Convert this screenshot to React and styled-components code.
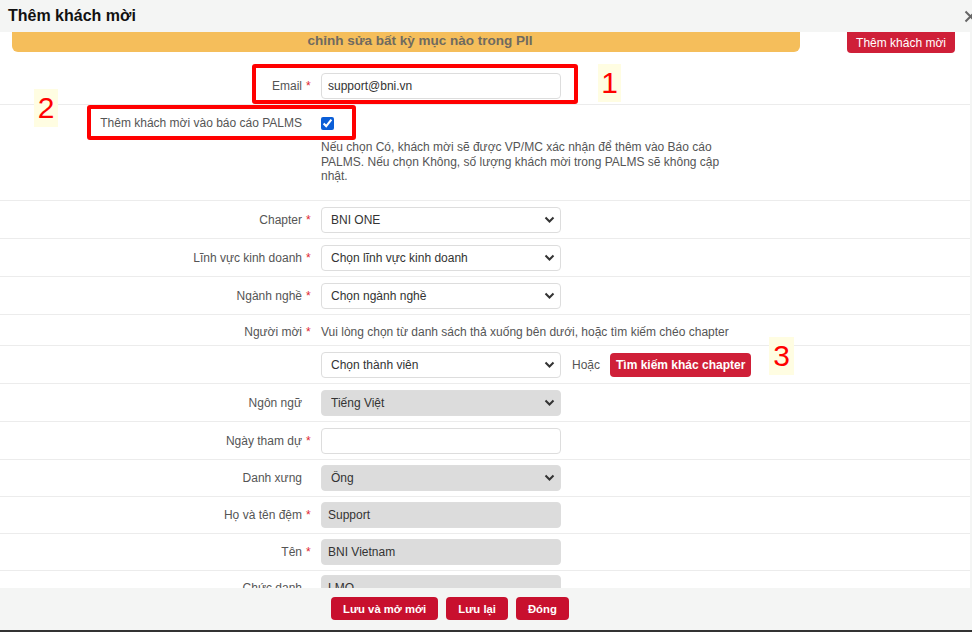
import React from "react";
import styled, { createGlobalStyle } from "styled-components";

const GlobalStyle = createGlobalStyle`
  html, body {
    margin: 0;
    padding: 0;
    background: #333;
  }
  body {
    font-family: "Liberation Sans", Arial, sans-serif;
  }
`;

const Modal = styled.div`
  position: relative;
  width: 972px;
  height: 630px;
  display: flex;
  flex-direction: column;
  background: #f4f5f4;
  overflow: hidden;
`;

const Header = styled.div`
  height: 32px;
  flex: none;
  display: flex;
  align-items: center;
  justify-content: space-between;
  padding-left: 8px;
`;

const Title = styled.h4`
  margin: 0;
  font-size: 16px;
  font-weight: 700;
  color: #111;
`;

const Close = styled.button`
  border: none;
  background: none;
  padding: 0;
  margin-right: -5px;
  display: flex;
  color: #666;
`;

const Body = styled.div`
  flex: 1;
  background: #fff;
  margin-right: 2px;
  overflow: hidden;
`;

const TopRow = styled.div`
  display: flex;
  align-items: flex-start;
  margin-bottom: 14px;
`;

const Banner = styled.div`
  width: 788px;
  height: 20px;
  margin-left: 12px;
  padding-left: 28px;
  box-sizing: border-box;
  background: #f5be5b;
  border-radius: 0 0 6px 6px;
  color: #6f6a60;
  font-size: 13.5px;
  font-weight: 700;
  line-height: 17px;
  text-align: center;
`;

const RedButton = styled.button`
  height: ${(p) => p.$h || 24}px;
  padding: 0 ${(p) => p.$px || 10}px;
  border: none;
  border-radius: ${(p) => (p.$flatTop ? "0 0 4px 4px" : "4px")};
  background: ${(p) => p.$bg || "#cf1f38"};
  color: #fff;
  font-family: inherit;
  font-size: ${(p) => p.$fs || 11.3}px;
  font-weight: 700;
  white-space: nowrap;
`;

const AddButton = styled(RedButton)`
  margin-left: auto;
  margin-right: 15px;
  font-weight: 400;
`;

const Row = styled.div`
  display: grid;
  grid-template-columns: 302px 19px 240px 1fr;
  align-items: ${(p) => (p.$top ? "start" : "center")};
  padding: ${(p) => p.$pad || "6px 0 5px"};
  border-bottom: 1px solid #ececec;
`;

const Label = styled.div`
  grid-column: 1;
  text-align: right;
  font-size: 12px;
  line-height: ${(p) => p.$lh || 16}px;
  color: #555;
  white-space: nowrap;
`;

const Star = styled.span`
  grid-column: 2;
  padding-left: 4px;
  color: #e0262f;
  font-size: 12px;
  line-height: ${(p) => p.$lh || 16}px;
`;

const Field = styled.div`
  grid-column: 3;
  position: relative;
`;

const Extra = styled.div`
  grid-column: ${(p) => p.$span || "4"};
  display: flex;
  align-items: center;
  gap: 10px;
  padding-left: ${(p) => p.$pl || 0}px;
  font-size: 12px;
  color: #555;
  line-height: 16px;
  white-space: nowrap;
`;

const Input = styled.input`
  width: 100%;
  height: 26px;
  box-sizing: border-box;
  padding: 0 6px;
  border: 1px solid #ddd;
  border-radius: 4px;
  background: ${(p) => (p.$readonly ? "#dcdcdc" : "#fff")};
  font-family: inherit;
  font-size: 12px;
  color: #333;
  outline: none;
`;

const Select = styled.select`
  appearance: none;
  width: 100%;
  height: 26px;
  box-sizing: border-box;
  padding: 0 24px 0 9px;
  border: 1px solid #ddd;
  border-radius: 4px;
  background: ${(p) => (p.$readonly ? "#dcdcdc" : "#fff")};
  font-family: inherit;
  font-size: 12px;
  color: #333;
  outline: none;
`;

const Chevron = styled.svg`
  position: absolute;
  right: 6px;
  top: 9px;
  pointer-events: none;
`;

const CheckLine = styled.div`
  height: 20px;
  display: flex;
  align-items: center;
`;

const Check = styled.input`
  margin: 0;
  width: 13px;
  height: 13px;
  accent-color: #0b5ed7;
`;

const Help = styled.p`
  width: 410px;
  margin: 7px 0 0;
  font-size: 12px;
  line-height: 14.5px;
  color: #555;
  white-space: normal;
`;

const Footer = styled.div`
  height: 42px;
  flex: none;
  box-sizing: border-box;
  display: flex;
  align-items: flex-start;
  gap: 8px;
  padding: 9px 0 0 331px;
`;

const Mark = styled.div`
  position: absolute;
  left: ${(p) => p.$x}px;
  top: ${(p) => p.$y}px;
  width: ${(p) => p.$w}px;
  height: ${(p) => p.$h}px;
  box-sizing: border-box;
  border: 4px solid #f00;
  border-radius: 3px;
  pointer-events: none;
`;

const Num = styled.div`
  position: absolute;
  left: ${(p) => p.$x}px;
  top: ${(p) => p.$y}px;
  width: ${(p) => p.$w}px;
  height: 38px;
  background: #fffde2;
  color: #f00;
  font-size: 30px;
  line-height: 38px;
  text-align: center;
`;

const ChevronIcon = () => (
  <Chevron width="11" height="8" viewBox="0 0 11 8">
    <path d="M1.5 1.5 L5.5 5.5 L9.5 1.5" fill="none" stroke="#333" strokeWidth="2" />
  </Chevron>
);

const SelectField = ({ value, readonly }) => (
  <Field>
    <Select $readonly={readonly} value={value} onChange={() => {}}>
      <option>{value}</option>
    </Select>
    <ChevronIcon />
  </Field>
);

const InputField = ({ value, readonly }) => (
  <Field>
    <Input $readonly={readonly} value={value} readOnly />
  </Field>
);

const FormRow = ({ label, required, pad, children }) => (
  <Row $pad={pad}>
    <Label>{label}</Label>
    {required && <Star>*</Star>}
    {children}
  </Row>
);

export default function App() {
  return (
    <>
      <GlobalStyle />
      <Modal>
        <Header>
          <Title>Thêm khách mời</Title>
          <Close>
            <svg width="13" height="13" viewBox="0 0 13 13">
              <path d="M1.5 1.5 L11.5 11.5 M11.5 1.5 L1.5 11.5" stroke="#666" strokeWidth="2" />
            </svg>
          </Close>
        </Header>
        <Body>
          <TopRow>
            <Banner>chỉnh sửa bất kỳ mục nào trong PII</Banner>
            <AddButton $h={21} $px={9} $fs={12} $flatTop>
              Thêm khách mời
            </AddButton>
          </TopRow>

          <FormRow label="Email" required>
            <InputField value="support@bni.vn" />
          </FormRow>

          <Row $top $pad="8px 0 16px">
            <Label $lh={20}>Thêm khách mời vào báo cáo PALMS</Label>
            <Extra $span="3 / 5">
              <div>
                <CheckLine>
                  <Check type="checkbox" checked readOnly />
                </CheckLine>
                <Help>
                  Nếu chọn Có, khách mời sẽ được VP/MC xác nhận để thêm vào Báo cáo
                  PALMS. Nếu chọn Không, số lượng khách mời trong PALMS sẽ không cập
                  nhật.
                </Help>
              </div>
            </Extra>
          </Row>

          <FormRow label="Chapter" required>
            <SelectField value="BNI ONE" />
          </FormRow>
          <FormRow label="Lĩnh vực kinh doanh" required>
            <SelectField value="Chọn lĩnh vực kinh doanh" />
          </FormRow>
          <FormRow label="Ngành nghề" required>
            <SelectField value="Chọn ngành nghề" />
          </FormRow>

          <Row $pad="9px 0 5px">
            <Label>Người mời</Label>
            <Star>*</Star>
            <Extra $span="3 / 5">
              Vui lòng chọn từ danh sách thả xuống bên dưới, hoặc tìm kiếm chéo chapter
            </Extra>
          </Row>

          <Row>
            <SelectField value="Chọn thành viên" />
            <Extra $pl={11}>
              <span>Hoặc</span>
              <RedButton $h={24} $px={6} $fs={12}>
                Tìm kiếm khác chapter
              </RedButton>
            </Extra>
          </Row>

          <FormRow label="Ngôn ngữ">
            <SelectField value="Tiếng Việt" readonly />
          </FormRow>
          <FormRow label="Ngày tham dự" required>
            <InputField value="" />
          </FormRow>
          <FormRow label="Danh xưng" pad="5px 0 5px">
            <SelectField value="Ông" readonly />
          </FormRow>
          <FormRow label="Họ và tên đệm" required pad="5px 0 5px">
            <InputField value="Support" readonly />
          </FormRow>
          <FormRow label="Tên" required pad="5px 0 5px">
            <InputField value="BNI Vietnam" readonly />
          </FormRow>
          <FormRow label="Chức danh" pad="4px 0 5px">
            <InputField value="LMO" readonly />
          </FormRow>
        </Body>
        <Footer>
          <RedButton $h={23} $px={12} $bg="#c8102e">
            Lưu và mở mới
          </RedButton>
          <RedButton $h={23} $px={12} $bg="#c8102e">
            Lưu lại
          </RedButton>
          <RedButton $h={23} $px={12} $bg="#c8102e">
            Đóng
          </RedButton>
        </Footer>

        <Mark $x={252} $y={64} $w={326} $h={40} />
        <Mark $x={87} $y={105} $w={269} $h={35} />
        <Num $x={598} $y={64} $w={23}>1</Num>
        <Num $x={34} $y={89} $w={24}>2</Num>
        <Num $x={769} $y={337} $w={25}>3</Num>
      </Modal>
    </>
  );
}
